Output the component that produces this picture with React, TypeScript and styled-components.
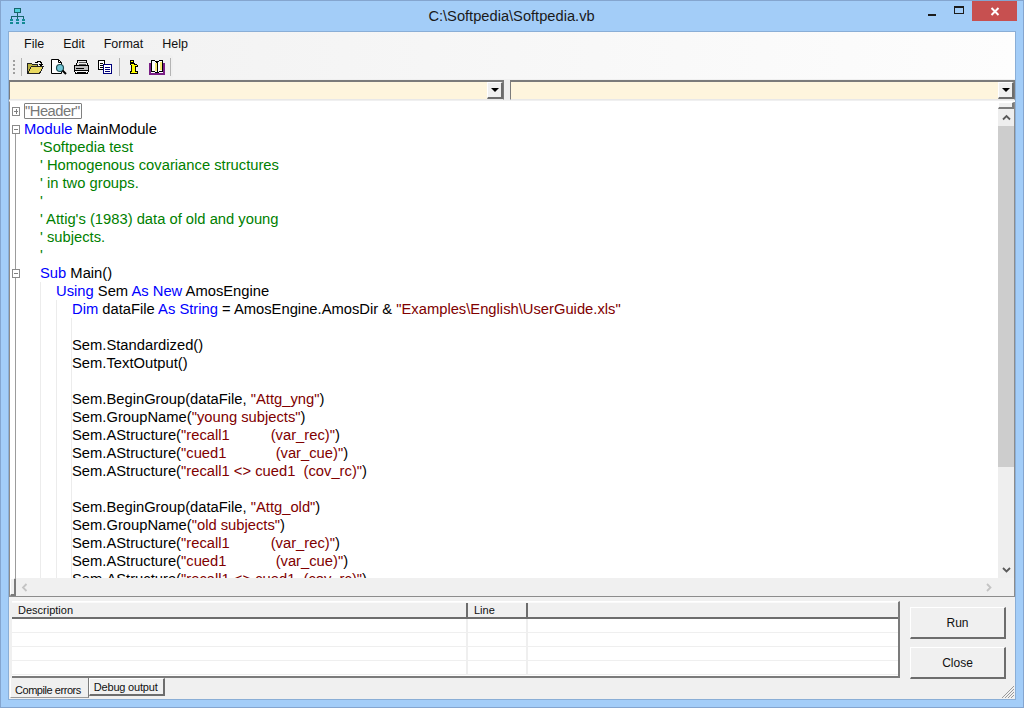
import React from 'react'
import styled, { createGlobalStyle } from 'styled-components'

const GlobalStyle = createGlobalStyle`
  html, body {
    margin: 0;
    padding: 0;
    width: 1024px;
    height: 708px;
    overflow: hidden;
    font-family: "Liberation Sans", Arial, sans-serif;
  }
`

const Frame = styled.div`
  box-sizing: border-box;
  width: 1024px;
  height: 708px;
  display: flex;
  flex-direction: column;
  background: #a3cdf8;
  border: 1px solid #84a5cf;
`

const TitleBar = styled.div`
  height: 30px;
  flex: none;
  display: grid;
  grid-template-columns: 1fr auto 1fr;
`

const AppIcon = styled.div`
  padding: 7px 0 0 8px;
  line-height: 0;
`

const TitleText = styled.div`
  font-size: 14.67px;
  line-height: 30px;
  padding-right: 1px;
  color: #1a1a1a;
`

const Controls = styled.div`
  display: flex;
  justify-content: flex-end;
  padding-right: 6px;
`

const CtlButton = styled.div<{ $close?: boolean }>`
  width: ${p => (p.$close ? '45px' : '26px')};
  height: 20px;
  display: flex;
  align-items: center;
  justify-content: center;
  background: ${p => (p.$close ? '#c75050' : 'transparent')};
  margin-left: ${p => (p.$close ? '0' : '1px')};
`

const MinGlyph = styled.div`
  width: 8px;
  height: 2px;
  margin-top: 8px;
  background: #1c1c1c;
`

const MaxGlyph = styled.div`
  box-sizing: border-box;
  width: 10px;
  height: 8px;
  margin-top: -2px;
  border: 1px solid #1c1c1c;
  border-top-width: 2px;
`

const Client = styled.div`
  flex: 1;
  margin: 0 7px 7px;
  display: flex;
  flex-direction: column;
  min-height: 0;
  background: #f0f0f0;
  border: 1px solid #8aaed6;
`

const TopBars = styled.div`
  flex: none;
  background: linear-gradient(to right, #f1f1f1, #fdfdfd);
`

const MenuBar = styled.div`
  height: 23px;
  display: flex;
  gap: 19px;
  padding-left: 15px;
  align-items: center;
  font-size: 12.5px;
  color: #111;
`

const ToolStrip = styled.div`
  box-sizing: border-box;
  width: 162px;
  height: 24px;
  margin-left: 2px;
  display: flex;
  align-items: center;
  background: #f0f0f0;
  border-radius: 3px;
  padding-left: 2px;
`

const Gripper = styled.div`
  width: 2px;
  height: 14px;
  margin-right: 3px;
  background: repeating-linear-gradient(to bottom, #a0a0a0 0 2px, transparent 2px 4px);
`

const ToolSep = styled.div<{ $last?: boolean }>`
  width: 1px;
  height: 18px;
  background: #b4b4b4;
  margin: ${p => (p.$last ? '0 0 0 2px' : '0 2px 0 3px')};
`

const ToolBtn = styled.div`
  width: 23px;
  height: 22px;
  display: flex;
  align-items: center;
  justify-content: center;
  line-height: 0;
`

const ComboRow = styled.div`
  flex: none;
  display: flex;
  gap: 6px;
  height: 22px;
  padding-top: 1px;
  box-sizing: border-box;
  background: #f0f0f0;
`

const Combo = styled.div<{ $w: number }>`
  box-sizing: border-box;
  width: ${p => p.$w}px;
  height: 20px;
  display: flex;
  justify-content: flex-end;
  background: #fef5dd;
  border-top: 2px solid #7b7b7b;
  border-left: 1px solid #7b7b7b;
  border-right: 1px solid #7b7b7b;
  border-bottom: 1px solid #e8e8e8;
`

const ComboButton = styled.div`
  box-sizing: border-box;
  width: 16px;
  height: 17px;
  display: flex;
  align-items: center;
  justify-content: center;
  background: #f0f0f0;
  border-top: 1px solid #fff;
  border-left: 1px solid #fff;
  border-right: 2px solid #6d6d6d;
  border-bottom: 2px solid #6d6d6d;
`

const DownTriangle = styled.div`
  width: 0;
  height: 0;
  border-left: 4px solid transparent;
  border-right: 4px solid transparent;
  border-top: 4px solid #000;
`

const Editor = styled.div`
  flex: 1;
  min-height: 0;
  display: grid;
  grid-template-columns: 1fr 17px;
  grid-template-rows: 1fr 18px;
  background: #f0f0f0;
  border-left: 1px solid #8c8c8c;
  border-top: 1px solid #fff;
  border-bottom: 1px solid #8c8c8c;
`

const Code = styled.div`
  overflow: hidden;
  background: #fff;
  font-size: 14.75px;
`

const CodeLine = styled.div`
  display: flex;
  height: 18px;
  line-height: 18px;
  white-space: pre;
  color: #000;
`

type FoldKind = 'none' | 'plus' | 'first' | 'minus' | 'line'

const Fold = styled.div<{ $kind: FoldKind }>`
  width: 14px;
  flex: none;
  display: flex;
  align-items: center;
  padding-left: 2px;
  box-sizing: border-box;
  background: ${p =>
    p.$kind === 'line' || p.$kind === 'minus'
      ? 'linear-gradient(#9c9c9c, #9c9c9c) 5px 0 / 1px 100% no-repeat'
      : p.$kind === 'first'
        ? 'linear-gradient(#9c9c9c, #9c9c9c) 5px 100% / 1px 50% no-repeat'
        : 'none'};
`

const FoldBox = styled.div<{ $plus?: boolean }>`
  box-sizing: border-box;
  width: 8px;
  height: 9px;
  background:
    linear-gradient(#808080, #808080) center / 4px 1px no-repeat,
    ${p => (p.$plus ? 'linear-gradient(#808080, #808080) center / 1px 5px no-repeat,' : '')}
    #fff;
  border: 1px solid #8a8a8a;
`

const Indent = styled.div<{ $guide?: boolean }>`
  box-sizing: border-box;
  width: 16px;
  flex: none;
  border-left: ${p => (p.$guide ? '1px solid #ececec' : '1px solid transparent')};
`

const LineText = styled.div<{ $guide?: boolean }>`
  flex: 1;
  box-shadow: ${p => (p.$guide ? '-1px 0 0 #ececec' : 'none')};
`

const Tok = styled.span<{ $t: string }>`
  color: ${p =>
    p.$t === 'k' ? '#0000ff' : p.$t === 'c' ? '#008000' : p.$t === 's' ? '#800000' : '#000'};
`

const Collapsed = styled.span`
  display: inline-block;
  box-sizing: border-box;
  height: 16px;
  line-height: 15px;
  margin-top: 1px;
  padding: 0 1px 0 0;
  letter-spacing: -0.5px;
  color: #777;
  border: 1px solid #808080;
  border-radius: 1px;
`

const VScroll = styled.div`
  grid-column: 2;
  grid-row: 1;
  display: flex;
  flex-direction: column;
  background: #eeeeee;
  border-right: 1px solid #8c8c8c;
`

const Splitter = styled.div`
  box-sizing: border-box;
  height: 7px;
  flex: none;
  background: #f0f0f0;
  border-top: 1px solid #fff;
  border-left: 1px solid #fff;
  border-right: 2px solid #7b7b7b;
  border-bottom: 2px solid #7b7b7b;
`

const ArrowBox = styled.div`
  height: 17px;
  flex: none;
  display: flex;
  align-items: center;
  justify-content: center;
  line-height: 0;
`

const Thumb = styled.div`
  height: 341px;
  flex: none;
  background: #cdcdcd;
`

const Track = styled.div`
  flex: 1;
`

const HScroll = styled.div`
  grid-column: 1 / span 2;
  grid-row: 2;
  display: flex;
  background: #f0f0f0;
  border-right: 1px solid #8c8c8c;
`

const HSplitter = styled.div`
  box-sizing: border-box;
  width: 6px;
  flex: none;
  background: #f0f0f0;
  border-top: 1px solid #fff;
  border-left: 1px solid #fff;
  border-right: 2px solid #7b7b7b;
  border-bottom: 2px solid #7b7b7b;
`

const HArrow = styled.div`
  width: 17px;
  flex: none;
  display: flex;
  align-items: center;
  justify-content: center;
  line-height: 0;
`

const HTrack = styled.div`
  flex: 1;
`

const Bottom = styled.div`
  flex: none;
  height: 102px;
  box-sizing: border-box;
  display: flex;
  background: #f0f0f0;
  position: relative;
`

const LeftPane = styled.div`
  width: 891px;
  flex: none;
  display: flex;
  flex-direction: column;
  padding: 4px 0 0 3px;
  box-sizing: border-box;
`

const ListBox = styled.div`
  box-sizing: border-box;
  height: 77px;
  flex: none;
  background: #fff;
  border-top: 1px solid #fff;
  border-right: 2px solid #7b7b7b;
  border-bottom: 2px solid #7b7b7b;
`

const ListHeader = styled.div`
  display: flex;
  height: 17px;
  box-sizing: border-box;
  background: #f0f0f0;
  border-top: 1px solid #fafafa;
  border-bottom: 2px solid #6d6d6d;
  font-size: 11px;
  color: #111;
`

const HeaderCell = styled.div<{ $w?: number }>`
  box-sizing: border-box;
  height: 14px;
  width: ${p => (p.$w ? `${p.$w}px` : 'auto')};
  flex: ${p => (p.$w ? 'none' : '1')};
  padding-left: 6px;
  line-height: 15px;
  border-right: ${p => (p.$w ? '2px solid #6d6d6d' : 'none')};
`

const ListRow = styled.div`
  display: flex;
  height: 14px;
  box-sizing: border-box;
  border-bottom: 1px solid #efefef;
`

const ListCell = styled.div<{ $w?: number }>`
  box-sizing: border-box;
  width: ${p => (p.$w ? `${p.$w}px` : 'auto')};
  flex: ${p => (p.$w ? 'none' : '1')};
  border-right: ${p => (p.$w ? '2px solid #efefef' : 'none')};
`

const TabRow = styled.div`
  display: flex;
  margin-left: -2px;
  font-size: 11px;
  color: #111;
`

const Tab = styled.div<{ $active?: boolean }>`
  box-sizing: border-box;
  height: ${p => (p.$active ? '20px' : '18px')};
  padding: ${p => (p.$active ? '5px 7px 0 4px' : '1px 5px 0 4px')};
  line-height: 14px;
  letter-spacing: ${p => (p.$active ? '-0.45px' : '-0.2px')};
  border-left: 1px solid #fff;
  border-top: ${p => (p.$active ? 'none' : '1px solid #fff')};
  border-right: ${p => (p.$active ? '1px solid #7b7b7b' : '2px solid #6d6d6d')};
  border-bottom: ${p => (p.$active ? '1px solid #9a9a9a' : '2px solid #6d6d6d')};
`

const RightPane = styled.div`
  flex: 1;
  display: flex;
  flex-direction: column;
  gap: 8px;
  padding: 10px 0 0 10px;
`

const ActionButton = styled.div`
  box-sizing: border-box;
  width: 96px;
  height: 32px;
  display: flex;
  align-items: center;
  justify-content: center;
  font-size: 12px;
  color: #111;
  background: #f0f0f0;
  border-top: 1px solid #fff;
  border-left: 1px solid #fff;
  border-right: 2px solid #6d6d6d;
  border-bottom: 2px solid #6d6d6d;
`

const Grip = styled.svg`
  position: absolute;
  right: 0;
  bottom: 0;
`

type Seg = [string, string]
type Row = { level: number; fold?: FoldKind; guide?: boolean; segs: Seg[] }

const k = (t: string): Seg => ['k', t]
const c = (t: string): Seg => ['c', t]
const s = (t: string): Seg => ['s', t]
const n = (t: string): Seg => ['n', t]

const deep = (...segs: Seg[]): Row => ({ level: 3, fold: 'line', guide: true, segs })

const rows: Row[] = [
  { level: 0, fold: 'first', segs: [k('Module'), n(' MainModule')] },
  { level: 1, fold: 'line', segs: [c("'Softpedia test")] },
  { level: 1, fold: 'line', segs: [c("' Homogenous covariance structures")] },
  { level: 1, fold: 'line', segs: [c("' in two groups.")] },
  { level: 1, fold: 'line', segs: [c("'")] },
  { level: 1, fold: 'line', segs: [c("' Attig's (1983) data of old and young")] },
  { level: 1, fold: 'line', segs: [c("' subjects.")] },
  { level: 1, fold: 'line', segs: [c("'")] },
  { level: 1, fold: 'minus', segs: [k('Sub'), n(' Main()')] },
  { level: 2, fold: 'line', segs: [k('Using'), n(' Sem '), k('As New'), n(' AmosEngine')] },
  {
    level: 3,
    fold: 'line',
    segs: [
      k('Dim'),
      n(' dataFile '),
      k('As String'),
      n(' = AmosEngine.AmosDir & '),
      s('"Examples\\English\\UserGuide.xls"'),
    ],
  },
  deep(),
  deep(n('Sem.Standardized()')),
  deep(n('Sem.TextOutput()')),
  deep(),
  deep(n('Sem.BeginGroup(dataFile, '), s('"Attg_yng"'), n(')')),
  deep(n('Sem.GroupName('), s('"young subjects"'), n(')')),
  deep(n('Sem.AStructure('), s('"recall1          (var_rec)"'), n(')')),
  deep(n('Sem.AStructure('), s('"cued1            (var_cue)"'), n(')')),
  deep(n('Sem.AStructure('), s('"recall1 <> cued1  (cov_rc)"'), n(')')),
  deep(),
  deep(n('Sem.BeginGroup(dataFile, '), s('"Attg_old"'), n(')')),
  deep(n('Sem.GroupName('), s('"old subjects"'), n(')')),
  deep(n('Sem.AStructure('), s('"recall1          (var_rec)"'), n(')')),
  deep(n('Sem.AStructure('), s('"cued1            (var_cue)"'), n(')')),
  deep(n('Sem.AStructure('), s('"recall1 <> cued1  (cov_rc)"'), n(')')),
]

const OrgIcon = () => (
  <svg width="17" height="17" viewBox="0 0 17 17" shapeRendering="crispEdges">
    <rect x="5.5" y="0.5" width="6" height="4" fill="#4fd0d8" stroke="#17666c" />
    <path d="M8.5 5v3M2.5 8.5h12M2.5 8v3M8.5 8v3M14.5 8v3" stroke="#17666c" fill="none" />
    <path d="M1 11h3v2H1zM7 11h3v2H7zM13 11h3v2h-3zM1 14h3v2H1zM7 14h3v2H7zM13 14h3v2h-3z" fill="#138a94" />
  </svg>
)

const OpenIcon = () => (
  <svg width="17" height="14" viewBox="0 0 17 14" shapeRendering="crispEdges">
    <path d="M0.500 3.500h4l1 1h5v2H4.500l-4 7z" fill="#b8b040" stroke="#222" />
    <path d="M4.500 6.500h12l-4 7h-12z" fill="#e8d860" stroke="#222" />
    <path d="M8 2.500h2v-1h3v1h1v2" fill="none" stroke="#000" />
    <path d="M12 3.500h4v1h-1v1h-2v-1h-1z" fill="#000" />
  </svg>
)

const PreviewIcon = () => (
  <svg width="17" height="16" viewBox="0 0 17 16">
    <path d="M1.500 0.500h7l3 3v11h-10z" fill="#fff" stroke="#000" />
    <path d="M8.500 0.500v3h3" fill="none" stroke="#000" />
    <circle cx="10" cy="9" r="3.500" fill="#74c8d8" stroke="#1f4e55" strokeWidth="1.200" />
    <path d="M12.500 11.500l3.500 3.500" stroke="#000" strokeWidth="2" />
  </svg>
)

const PrintIcon = () => (
  <svg width="17" height="14" viewBox="0 0 17 14" shapeRendering="crispEdges">
    <path d="M4.500 0.500h9l1 5h-11z" fill="#e8e8e8" stroke="#000" />
    <path d="M6 2.500h7M6 4h7" stroke="#555" />
    <path d="M1.500 5.500h14v5h-14z" fill="#c0c0c0" stroke="#000" />
    <path d="M1.500 10.500h14l-1 3h-12z" fill="#f4f4f4" stroke="#000" />
    <path d="M3 8.500h8" stroke="#000" />
    <path d="M4 12h9" stroke="#000" />
  </svg>
)

const CopyIcon = () => (
  <svg width="16" height="14" viewBox="0 0 16 14" shapeRendering="crispEdges">
    <path d="M1.500 0.500h6v9h-6z" fill="#fff" stroke="#000" />
    <path d="M3 3.500h3M3 5.500h3M3 7.500h3" stroke="#000" />
    <path d="M6.500 4.500h8v9h-8z" fill="#fff" stroke="#00007b" />
    <path d="M8 7.500h5M8 9.500h5M8 11.500h5" stroke="#00007b" />
  </svg>
)

const UpFigureIcon = () => (
  <svg width="10" height="14" viewBox="0 0 10 14" shapeRendering="crispEdges">
    <path d="M1 0h4v3H1z" fill="#000" />
    <path d="M2 1h2v1H2z" fill="#ff0" />
    <path d="M1 3h5v1h2v1h1v2H7v4h2v3H1v-3h1V5H1z" fill="#000" />
    <path d="M2 4h3v1h3v1H6v6h2v1H2v-1h1V5H2z" fill="#ff0" />
  </svg>
)

const BookIcon = () => (
  <svg width="16" height="15" viewBox="0 0 16 15" shapeRendering="crispEdges">
    <path d="M0.500 2.500v12h15v-12" fill="#fff" stroke="#7a1f86" strokeWidth="1" />
    <path d="M1.500 3v10.500h13V3" fill="none" stroke="#7a1f86" />
    <path d="M2.500 0.500h3l2.500 2 2.500-2h3v11h-3l-2.500 1.500-2.500-1.500h-3z" fill="#fff" stroke="#000" />
    <path d="M8.500 2.500v10" stroke="#000" />
    <path d="M6 3h2v8H6zM11 2h2v8h-2z" fill="#f6ea74" />
  </svg>
)

const Chevron = ({ dir, color }: { dir: 'up' | 'down' | 'left' | 'right'; color: string }) => {
  const d = {
    up: 'M1 6.500L4.500 3 8 6.500',
    down: 'M1 3L4.500 6.500 8 3',
    left: 'M6.500 1L3 4.500 6.500 8',
    right: 'M3 1L6.500 4.500 3 8',
  }[dir]
  return (
    <svg width="9" height="9" viewBox="0 0 9 9">
      <path d={d} fill="none" stroke={color} strokeWidth="1.800" />
    </svg>
  )
}

const CodeRow = ({ row }: { row: Row }) => (
  <CodeLine>
    <Fold $kind={row.fold ?? 'none'}>
      {row.fold === 'minus' || row.fold === 'first' ? <FoldBox /> : null}
    </Fold>
    {Array.from({ length: row.level }, (_, i) => (
      <Indent key={i} $guide={i > 0} />
    ))}
    <LineText $guide={row.guide}>
      {row.segs.map((seg, i) => (
        <Tok key={i} $t={seg[0]}>
          {seg[1]}
        </Tok>
      ))}
    </LineText>
  </CodeLine>
)

export default function App() {
  return (
    <>
      <GlobalStyle />
      <Frame>
        <TitleBar>
          <AppIcon>
            <OrgIcon />
          </AppIcon>
          <TitleText>C:\Softpedia\Softpedia.vb</TitleText>
          <Controls>
            <CtlButton>
              <MinGlyph />
            </CtlButton>
            <CtlButton>
              <MaxGlyph />
            </CtlButton>
            <CtlButton $close>
              <svg width="10" height="9" viewBox="0 0 10 9">
                <path d="M1.500 1l7 7M8.500 1l-7 7" stroke="#fff" strokeWidth="2" />
              </svg>
            </CtlButton>
          </Controls>
        </TitleBar>
        <Client>
          <TopBars>
            <MenuBar>
              <span>File</span>
              <span>Edit</span>
              <span>Format</span>
              <span>Help</span>
            </MenuBar>
            <ToolStrip>
              <Gripper />
              <ToolSep />
              <ToolBtn>
                <OpenIcon />
              </ToolBtn>
              <ToolBtn>
                <PreviewIcon />
              </ToolBtn>
              <ToolBtn>
                <PrintIcon />
              </ToolBtn>
              <ToolBtn>
                <CopyIcon />
              </ToolBtn>
              <ToolSep />
              <ToolBtn>
                <UpFigureIcon />
              </ToolBtn>
              <ToolBtn>
                <BookIcon />
              </ToolBtn>
              <ToolSep $last />
            </ToolStrip>
          </TopBars>
          <ComboRow>
            <Combo $w={495}>
              <ComboButton>
                <DownTriangle />
              </ComboButton>
            </Combo>
            <Combo $w={505}>
              <ComboButton>
                <DownTriangle />
              </ComboButton>
            </Combo>
          </ComboRow>
          <Editor>
            <Code>
              <CodeLine>
                <Fold $kind="plus">
                  <FoldBox $plus />
                </Fold>
                <LineText>
                  <Collapsed>"Header"</Collapsed>
                </LineText>
              </CodeLine>
              {rows.map((row, i) => (
                <CodeRow key={i} row={row} />
              ))}
            </Code>
            <VScroll>
              <Splitter />
              <ArrowBox>
                <Chevron dir="up" color="#5a5a5a" />
              </ArrowBox>
              <Thumb />
              <Track />
              <ArrowBox>
                <Chevron dir="down" color="#5a5a5a" />
              </ArrowBox>
            </VScroll>
            <HScroll>
              <HSplitter />
              <HArrow>
                <Chevron dir="left" color="#c4c4c4" />
              </HArrow>
              <HTrack />
              <HArrow>
                <Chevron dir="right" color="#c4c4c4" />
              </HArrow>
              <HArrow />
            </HScroll>
          </Editor>
          <Bottom>
            <LeftPane>
              <ListBox>
                <ListHeader>
                  <HeaderCell $w={456}>Description</HeaderCell>
                  <HeaderCell $w={60}>Line</HeaderCell>
                  <HeaderCell />
                </ListHeader>
                {[0, 1, 2, 3].map(i => (
                  <ListRow key={i}>
                    <ListCell $w={456} />
                    <ListCell $w={60} />
                    <ListCell />
                  </ListRow>
                ))}
              </ListBox>
              <TabRow>
                <Tab $active>Compile errors</Tab>
                <Tab>Debug output</Tab>
              </TabRow>
            </LeftPane>
            <RightPane>
              <ActionButton>Run</ActionButton>
              <ActionButton>Close</ActionButton>
            </RightPane>
            <Grip width="14" height="14" viewBox="0 0 14 14">
              <path d="M13 1L1 13M13 4L4 13M13 7L7 13M13 10L10 13" stroke="#9a9a9a" />
            </Grip>
          </Bottom>
        </Client>
      </Frame>
    </>
  )
}
